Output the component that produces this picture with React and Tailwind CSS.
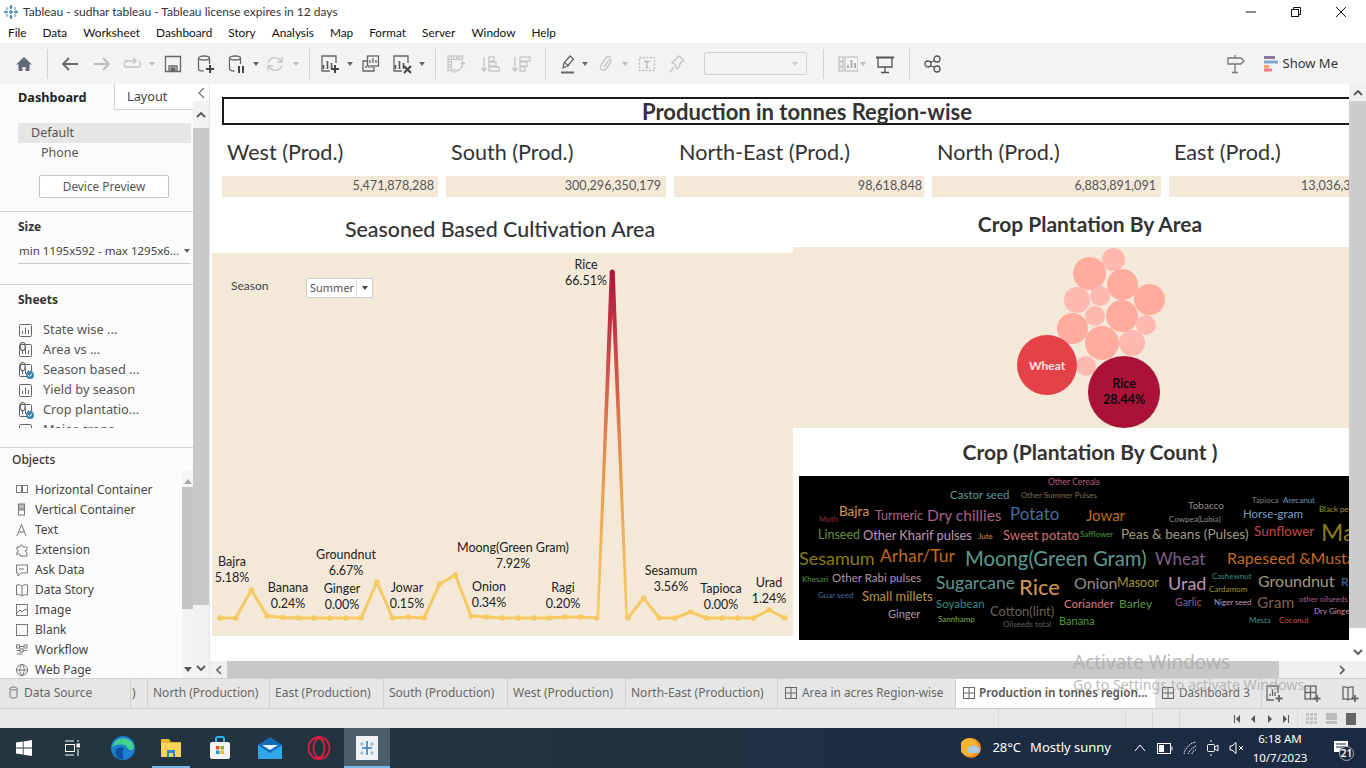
import React from "react";

const S = ({ c = "#555", w = 20, h = 20, children, className = "" }) => (
  <svg width={w} height={h} viewBox={`0 0 ${w} ${h}`} fill="none" stroke={c} strokeWidth="1.3" className={`shrink-0 ${className}`}>{children}</svg>
);
const Caret = ({ c = "#777", className = "" }) => (
  <svg width="6" height="4" viewBox="0 0 6 4" className={`shrink-0 ${className}`}><path d="M0 0h6L3 4z" fill={c} /></svg>
);
const Sep = ({ className = "" }) => <div className={`w-px h-[30px] bg-[#d2d2d2] shrink-0 ${className}`} />;
const Bars = ({ c = "#555" }) => <><path d="M3.5 11v4M7.5 7v8M11.5 9v6" stroke={c} strokeWidth="1.6" /></>;

const MiniSheet = ({ check }) => (
  <span className="relative shrink-0 w-[13px] h-[13px] block">
    <svg width="13" height="13" viewBox="0 0 13 13" fill="none" stroke="#666"><rect x=".5" y=".5" width="12" height="12" rx="1" /><path d="M3.5 10V7M6.5 10V3.500M9.500 10V6" /></svg>
    {check && (
      <svg width="8" height="8" viewBox="0 0 8 8" className="absolute -right-[2px] -bottom-[2px]"><circle cx="4" cy="4" r="4" fill="#3b86ad" /><path d="M2 4l1.500 1.500L6 2.800" stroke="#fff" fill="none" /></svg>
    )}
  </span>
);

const objIcons = {
  h: <><rect x="1.500" y="2.500" width="5" height="7" /><rect x="7.500" y="2.500" width="5" height="7" /></>,
  v: <><rect x="3.500" y="1" width="6" height="5" fill="#bbb" /><rect x="3.500" y="7" width="6" height="5" /></>,
  t: <path d="M2 13L6.500 1.500 11 13M3.600 9h6" />,
  e: <path d="M2 4h3c0-3 3-3 3 0h4v3l-2 1 2 2v3H5v-1c0-2-3-2-3 0V9c2 0 2-2 0-2z" />,
  a: <path d="M1.500 2h11v8H6l-3 3v-3H1.500zM4 6h5" />,
  d: <path d="M7 3c-2-1.500-4-1.500-5.500-1v10c1.500-.5 3.500-.5 5.500 1 2-1.500 4-1.500 5.500-1V2C11 1.500 9 1.500 7 3zv10" />,
  i: <><rect x="1.500" y="1.500" width="11" height="11" /><path d="M2 10l3-3 2 2 3-3 2 1" /></>,
  b: <rect x="1.500" y="1.500" width="11" height="11" />,
  w: <><rect x="1.500" y="2" width="3" height="3" /><rect x="9" y="2" width="3" height="3" /><rect x="5" y="6" width="3" height="3" /><path d="M5 3.500h4M1.500 7.500H5M8 7.500h4M2 11h5" /></>,
  g: <><circle cx="7" cy="7" r="5.500" /><path d="M1.500 7h11M7 1.500c-3 3-3 8 0 11 3-3 3-8 0-11z" /></>,
};

const objects = [["h", "Horizontal Container"], ["v", "Vertical Container"], ["t", "Text"], ["e", "Extension"], ["a", "Ask Data"], ["d", "Data Story"], ["i", "Image"], ["b", "Blank"], ["w", "Workflow"], ["g", "Web Page"]];
const sheets = [["State wise ...", 0], ["Area vs ...", 0], ["Season based ...", 1], ["Yield by season", 0], ["Crop plantatio...", 1], ["Major crops", 0]];

const ys = [618, 618, 590, 616, 617.5, 618, 618, 618, 618, 618, 582, 618, 617, 618, 584, 575, 616, 617, 618, 618, 618, 618, 617, 617, 618, 272, 618, 598, 618, 618, 612, 618, 618, 618, 618, 610, 618];
const pts = ys.map((y, i) => [220 - 212 + i * 15.69, y - 253]);
const labels = [
  ["Bajra", "5.18%", 232, 562], ["Banana", "0.24%", 288, 588], ["Groundnut", "6.67%", 346, 555], ["Ginger", "0.00%", 342, 589],
  ["Jowar", "0.15%", 407, 588], ["Moong(Green Gram)", "7.92%", 513, 548], ["Onion", "0.34%", 489, 587], ["Ragi", "0.20%", 563, 588],
  ["Rice", "66.51%", 586, 265], ["Sesamum", "3.56%", 671, 571], ["Tapioca", "0.00%", 721, 589], ["Urad", "1.24%", 769, 583],
];

const bubbles = [
  [1113, 259, 11.5, "#ffb9ae"], [1089, 273, 16.5, "#ffab9d"], [1122, 284, 15.5, "#ffab9d"], [1077, 300, 13, "#ffb9ae"], [1100, 296, 10, "#ffb9ae"],
  [1149, 299, 15.5, "#ffab9d"], [1095, 316, 10, "#ffb9ae"], [1122, 316, 16, "#ffab9d"], [1146, 325, 10, "#ffb9ae"], [1072, 328, 15.5, "#ffab9d"],
  [1102, 343, 17, "#ffab9d"], [1132, 343, 13, "#ffb9ae"], [1086, 366, 10, "#ffb9ae"], [1047, 365, 30, "#e54149"], [1124, 392, 36, "#ab1238"],
];

const words = [
  ["Other Cereals", 1048, 482, 8.5, "#c76b8c"], ["Castor seed", 950, 495, 11.5, "#6aa8a0"], ["Other Summer Pulses", 1021, 495, 8, "#8b7c5c"],
  ["Tobacco", 1188, 505, 10, "#a59f97"], ["Tapioca", 1252, 500, 8, "#8a8a8a"], ["Arecanut", 1283, 500, 8, "#7aa7c7"], ["Black pepper", 1319, 509, 8, "#b9a238"],
  ["Moth", 819, 519, 8, "#a0353e"], ["Bajra", 839, 512, 13.5, "#f1a95b"], ["Turmeric", 875, 516, 12.5, "#c46d8a"], ["Dry chillies", 927, 516, 15.5, "#bb6b93"],
  ["Potato", 1010, 513, 17, "#4f7cad"], ["Jowar", 1086, 515, 15, "#d9771e"], ["Cowpea(Lobia)", 1169, 519, 8, "#a59f97"], ["Horse-gram", 1243, 514, 11.5, "#84b0d8"],
  ["Linseed", 818, 535, 12.5, "#68a34e"], ["Other Kharif pulses", 863, 535, 12.8, "#d4a6c8"], ["Jute", 978, 536, 8, "#e0a050"], ["Sweet potato", 1003, 535, 13, "#e0807f"],
  ["Safflower", 1080, 534, 8, "#5aa84a"], ["Peas & beans (Pulses)", 1121, 535, 13.6, "#b5aa90"], ["Sunflower", 1254, 532, 13.5, "#d94f55"], ["Maize", 1321, 532, 24, "#9c8a1c"],
  ["Sesamum", 799, 558, 18, "#9c8a1c"], ["Arhar/Tur", 880, 556, 17.5, "#d9771e"], ["Moong(Green Gram)", 965, 558, 20.3, "#6aa8a0"], ["Wheat", 1155, 558, 17, "#8f6a8f"],
  ["Rapeseed &Mustard", 1227, 558, 16, "#d9771e"], ["Khesari", 802, 579, 8, "#5aa84a"], ["Other Rabi pulses", 832, 578, 11.5, "#c4a6bc"], ["Sugarcane", 936, 583, 17.5, "#6aa8a0"],
  ["Rice", 1019, 587, 22, "#f2a95c"], ["Onion", 1074, 583, 16, "#a59f97"], ["Masoor", 1117, 583, 12.5, "#b9a238"], ["Urad", 1168, 583, 18, "#d4a6c8"],
  ["Cashewnut", 1212, 576, 8, "#3f9f99"], ["Groundnut", 1258, 581, 16, "#b5aa90"], ["Ragi", 1341, 582, 12, "#4f7cad"], ["Cardamom", 1209, 589, 8, "#b9a238"],
  ["Guar seed", 818, 595, 8, "#4f7cad"], ["Small millets", 862, 596, 13, "#d4a54e"], ["Soyabean", 936, 604, 11.5, "#3f9f99"], ["Cotton(lint)", 990, 611, 13, "#6f6f6f"],
  ["Coriander", 1064, 604, 11.5, "#f08a85"], ["Barley", 1119, 604, 12, "#68a34e"], ["Garlic", 1175, 602, 10.5, "#9c6b9c"], ["Niger seed", 1214, 602, 8, "#d4a6c8"],
  ["Gram", 1257, 603, 15.5, "#8c6d5a"], ["other oilseeds", 1299, 599, 8, "#b06f9f"], ["Dry Ginger", 1314, 611, 8, "#d4a6c8"], ["Ginger", 888, 613, 11, "#c4a6bc"],
  ["Sannhamp", 938, 619, 8, "#8cc06f"], ["Oilseeds total", 1003, 624, 8, "#6f6f6f"], ["Banana", 1059, 620, 11, "#5aa84a"], ["Mesta", 1249, 620, 8, "#3f9f99"], ["Coconut", 1279, 620, 8, "#e05a5a"],
];

const kpis = [
  ["West (Prod.)", "5,471,878,288", "w-[216px]", "pr-[4px]"], ["South (Prod.)", "300,296,350,179", "w-[220px]", "pr-[5px]"], ["North-East (Prod.)", "98,618,848", "w-[250px]", "pr-[2px]"],
  ["North (Prod.)", "6,883,891,091", "w-[229px]", "pr-[5px]"], ["East (Prod.)", "13,036,364,507", "w-[226px]", "pr-[5px]"],
];

const tabs = [
  ["North (Production)", "w-[122px]"], ["East (Production)", "w-[114px]"], ["South (Production)", "w-[124px]"], ["West (Production)", "w-[118px]"], ["North-East (Production)", "w-[152px]"],
];

const Grid = ({ c = "#666" }) => (
  <svg width="12" height="12" viewBox="0 0 12 12" fill="none" stroke={c} className="shrink-0"><rect x=".5" y=".5" width="11" height="11" /><path d="M6 0v12M0 6h12" /></svg>
);
const BookFont = "font-['Lato',sans-serif]";

export default function App() {
  return (
    <div className="relative w-[1366px] h-[768px] overflow-hidden bg-white flex flex-col font-['Noto_Sans',sans-serif] text-[#333]">
      {/* Title bar */}
      <div className="h-[23px] flex items-center shrink-0 relative">
        <svg width="16" height="16" viewBox="0 0 16 16" className="ml-[3px] mr-[4px]" stroke="#3f8fb5" strokeWidth="1.400" fill="none"><path d="M8 1v4M6.500 3h3M8 11v4M6.500 13h3M1 8h4M3 6.500v3M11 8h4M13 6.500v3M8 6v4M6 8h4" /><path d="M4 3v3M2.800 4.500h2.500M12 3v3M10.800 4.500h2.500M4 10v3M2.800 11.500h2.500M12 10v3M10.800 11.500h2.500" stroke="#9cc3d6" /></svg>
        <span className="text-[12px] font-['Lato',sans-serif] whitespace-nowrap">Tableau - sudhar tableau - Tableau license expires in 12 days</span>
        <div className="ml-auto flex items-center">
          <svg width="12" height="12" viewBox="0 0 12 12" stroke="#111" className="mr-[33px]"><path d="M1 6h10" /></svg>
          <svg width="12" height="12" viewBox="0 0 12 12" stroke="#111" fill="none" className="mr-[33px]"><rect x="1.500" y="3.500" width="7" height="7" /><path d="M3.500 3.500v-2h7v7h-2" /></svg>
          <svg width="12" height="12" viewBox="0 0 12 12" stroke="#111" className="mr-[19px]"><path d="M1 1l10 10M11 1L1 11" /></svg>
        </div>
      </div>
      {/* Menu */}
      <div className="h-[20px] flex items-center shrink-0 pl-[8px] text-[11.800px] font-['Lato',sans-serif] text-[#111] pb-[1px] whitespace-nowrap">
        <span>File</span><span className="ml-[16px]">Data</span><span className="ml-[16px]">Worksheet</span><span className="ml-[16px]">Dashboard</span>
        <span className="ml-[16px]">Story</span><span className="ml-[16px]">Analysis</span><span className="ml-[16px]">Map</span><span className="ml-[16px]">Format</span>
        <span className="ml-[16px]">Server</span><span className="ml-[16px]">Window</span><span className="ml-[16px]">Help</span>
      </div>
      {/* Toolbar */}
      <div className="h-[41px] shrink-0 bg-[#f3f3f3] flex items-center relative">
        <S c="#5f6b75" className="ml-[14px]"><path d="M10 3L2 10.500h2.500V17h4v-4h3v4h4v-6.500H18z" fill="#5f6b75" stroke="none" /></S>
        <Sep className="ml-[13px]" />
        <S c="#666" className="ml-[12px]"><path d="M18 10H3M9 4l-6 6 6 6" strokeWidth="1.800" /></S>
        <S c="#bbb" className="ml-[12px]"><path d="M2 10h15M11 4l6 6-6 6" strokeWidth="1.800" /></S>
        <S c="#c4c4c4" className="ml-[10px]"><path d="M14 7H5a3 3 0 000 6h11a3 3 0 001-5.500M11 4l3 3-3 3" /></S>
        <Caret c="#bbb" className="ml-[7px]" />
        <S c="#666" className="ml-[8px]"><path d="M2.500 2.500h15v15h-15z" /><path d="M6 17v-5h8v5" /><rect x="8" y="14" width="4" height="3" fill="#666" /></S>
        <S c="#666" className="ml-[12px]"><ellipse cx="9" cy="4" rx="5.500" ry="2" /><path d="M3.500 4v11c0 1 1.500 2 5 2M14.500 4v6" /><path d="M15 11v8M11 15h8" strokeWidth="2" stroke="#444" /></S>
        <S c="#666" className="ml-[11px]"><ellipse cx="9" cy="4" rx="5.500" ry="2" /><path d="M3.500 4v11c0 1 1.500 2 5 2M14.500 4v6" /><path d="M13 12v7M17 12v7" strokeWidth="2" stroke="#444" /></S>
        <Caret c="#666" className="ml-[7px]" />
        <S c="#c4c4c4" className="ml-[6px]"><path d="M3 9a7 7 0 0112-3l2 2M17 11a7 7 0 01-12 3l-2-2M17 3v5h-5M3 17v-5h5" /></S>
        <Caret c="#bbb" className="ml-[8px]" />
        <Sep className="ml-[10px]" />
        <S c="#666" className="ml-[10px]"><path d="M16 9V2H2v15h8" /><Bars c="#555" /><path d="M15 11v8M11 15h8" strokeWidth="2" stroke="#444" /></S>
        <Caret c="#666" className="ml-[7px]" />
        <S c="#666" className="ml-[8px]"><rect x="6.500" y="2" width="11" height="10" /><path d="M9 9V6M12 9V4M15 9V6" /><path d="M6 7H2v10h11v-4M5 14v-2M8 14v-1M11 14v-1" /></S>
        <S c="#666" className="ml-[11px]"><path d="M16 9V2H2v15h8" /><Bars c="#555" /><path d="M12 12l7 7M19 12l-7 7" strokeWidth="2" stroke="#444" /></S>
        <Caret c="#666" className="ml-[7px]" />
        <Sep className="ml-[10px]" />
        <S c="#c4c4c4" className="ml-[10px]"><rect x="2" y="2" width="3.500" height="3.500" /><rect x="7.500" y="2" width="3.500" height="3.500" /><rect x="13" y="2" width="3.500" height="3.500" /><rect x="2" y="7.500" width="3.500" height="3.500" /><rect x="2" y="13" width="3.500" height="3.500" /><path d="M17 8c0 5-3 9-8 9M9 15l-2 2 2 2M15 10l2-2 2 2" /></S>
        <S c="#c4c4c4" className="ml-[14px]"><path d="M4 3v14M1.500 14L4 17l2.500-3" /><rect x="9" y="3" width="5" height="4" /><rect x="9" y="8" width="7" height="4" /><rect x="9" y="13" width="10" height="4" /></S>
        <S c="#c4c4c4" className="ml-[11px]"><path d="M4 3v14M1.500 14L4 17l2.500-3" /><rect x="9" y="3" width="10" height="4" /><rect x="9" y="8" width="7" height="4" /><rect x="9" y="13" width="5" height="4" /></S>
        <Sep className="ml-[14px]" />
        <S c="#666" className="ml-[12px]"><path d="M5 14l1-5 6-7 3.500 3-6 7zM7 9l4 3" /><path d="M3 18.500h13" strokeWidth="2" /></S>
        <Caret c="#666" className="ml-[4px]" />
        <S c="#c4c4c4" className="ml-[8px]"><path d="M15 4c-2-2-4-1-5 0l-5 7c-2 3 0 6 3 5 1 0 2-1 2-1l5-7c1-2-1-3-2-2l-5 7" /></S>
        <Caret c="#bbb" className="ml-[6px]" />
        <S c="#bbb" className="ml-[9px]"><rect x="2.500" y="3.500" width="15" height="13" strokeDasharray="2 1.500" /><path d="M7 7.500h6M10 7.500v6M8.500 13.500h3" /></S>
        <S c="#c4c4c4" className="ml-[10px]"><path d="M12 2l5 5-3 1-2 5-2 2-2-5-3-1 3-3zM7 13l-4 5" /></S>
        <div className="ml-[17px] w-[103px] h-[23px] border border-[#d0d0d0] rounded-[2px] flex items-center justify-end pr-[8px] shrink-0"><Caret c="#ccc" /></div>
        <Sep className="ml-[16px]" />
        <S c="#c4c4c4" className="ml-[14px]"><rect x="1" y="3" width="4" height="4" /><rect x="1" y="8" width="4" height="4" /><rect x="1" y="13" width="4" height="4" /><rect x="7" y="3" width="13" height="14" /><path d="M10 14v-3M13.500 14V6M17 14V9" strokeWidth="1.800" stroke="#aaa" /></S>
        <Caret c="#bbb" className="ml-[2px]" />
        <S c="#555" className="ml-[9px]"><path d="M1 3.500h18" strokeWidth="2" /><path d="M3 4v9h14V4M10 13v5M6 18.500h8" /></S>
        <Sep className="ml-[14px]" />
        <S c="#555" className="ml-[13px]"><circle cx="5" cy="10" r="3" /><circle cx="14" cy="5" r="3" /><circle cx="14" cy="15" r="3" /><path d="M7.500 8.500l4-2M7.500 11.500l4 2" /></S>
        <S c="#777" className="ml-auto"><path d="M2 4h13l3 3-3 3H2zM9 10v8M6 18.500h6M9 1v3" /></S>
        <svg width="16" height="16" viewBox="0 0 16 16" className="ml-[18px] shrink-0"><rect y="0" width="11" height="3" fill="#8a7a9f" /><rect y="4.500" width="14" height="3" fill="#85a8d0" /><rect y="9" width="5" height="3" fill="#f4a266" /><rect y="12.500" width="8" height="3" fill="#f17a84" /></svg>
        <span className="ml-[3px] mr-[28px] text-[13px] text-[#333]">Show Me</span>
      </div>
      {/* Main */}
      <div className="h-[594px] shrink-0 flex">
        {/* Sidebar */}
        <div className="w-[210px] shrink-0 flex border-r border-[#e4e4e4] bg-[#fbfbfb]">
          <div className="w-[193px] shrink-0 flex flex-col">
            <div className="h-[26px] shrink-0 flex">
              <div className="w-[114px] flex items-center pl-[18px] pt-[1px] text-[12.700px] font-bold text-[#222]">Dashboard</div>
              <div className="w-[79px] flex items-center pl-[12px] pt-[1px] text-[12.700px] border-l border-b border-[#d0d0d0] bg-white text-[#444]">Layout</div>
            </div>
            <div className="h-[102px] shrink-0 border-b border-[#cfcfcf] pt-[13px] flex flex-col text-[12.500px] text-[#555]">
              <div className="ml-[18px] w-[173px] h-[20px] pt-[1px] bg-[#e6e6e6] flex items-center pl-[13px]">Default</div>
              <div className="h-[20px] pl-[41px] pt-[1px] flex items-center">Phone</div>
              <div className="ml-[39px] mt-[12px] w-[130px] h-[23px] border border-[#c6c6c6] rounded-[2px] flex items-center justify-center text-[11.800px] bg-white">Device Preview</div>
            </div>
            <div className="h-[73px] shrink-0 border-b border-[#cfcfcf] flex flex-col">
              <div className="pl-[18px] h-[28px] mt-[1px] flex items-center text-[12px] font-bold text-[#333]">Size</div>
              <div className="ml-[18px] w-[173px] h-[22px] mt-[1px] border-b border-[#c8c8c8] flex items-center pl-[1px] pr-[1px] text-[11.500px] justify-between pb-[3px] text-[#444]">
                <span className="whitespace-nowrap">min 1195x592 - max 1295x6...</span><Caret c="#666" />
              </div>
            </div>
            <div className="h-[163px] shrink-0 border-b border-[#cfcfcf] flex flex-col">
              <div className="pl-[18px] h-[28px] mt-[1px] flex items-center text-[12px] font-bold text-[#333]">Sheets</div>
              <div className="mt-[6px] h-[108px] overflow-hidden flex flex-col">
                {sheets.map(([t, c]) => (
                  <div key={t} className="h-[20px] shrink-0 flex items-center pl-[19px] text-[12.800px] text-[#555]">
                    <MiniSheet check={c} /><span className="ml-[11px] whitespace-nowrap">{t}</span>
                  </div>
                ))}
              </div>
            </div>
            <div className="flex-1 flex flex-col min-h-0">
              <div className="pl-[12px] h-[23px] flex items-center text-[12px] font-medium text-[#333]">Objects</div>
              <div className="flex flex-1 min-h-0">
                <div className="w-[182px] pt-[9px] shrink-0 overflow-hidden">
                  {objects.map(([k, t]) => (
                    <div key={t} className="h-[20px] flex items-center pl-[16px] text-[12px] text-[#444] whitespace-nowrap">
                      <svg width="14" height="14" viewBox="0 0 14 14" fill="none" stroke="#777" className="shrink-0 -ml-[1px]">{objIcons[k]}</svg>
                      <span className="ml-[6px]">{t}</span>
                    </div>
                  ))}
                </div>
                <div className="w-[11px] flex flex-col items-center pt-[8px] bg-[#f4f4f4]">
                  <svg width="8" height="5" viewBox="0 0 8 5"><path d="M4 0l4 5H0z" fill="#aaa" /></svg>
                  <div className="w-full h-[122px] mt-[3px] bg-[#c4c4c4]" />
                  <svg width="8" height="5" viewBox="0 0 8 5" className="mt-auto mb-[6px]"><path d="M4 5l4-5H0z" fill="#555" /></svg>
                </div>
              </div>
            </div>
          </div>
          <div className="w-[16px] shrink-0 flex flex-col items-center bg-[#f2f2f2]">
            <div className="h-[17px] w-full bg-white flex items-center justify-center relative">
              <svg width="7" height="12" viewBox="0 0 7 12" fill="none" stroke="#777" strokeWidth="1.300"><path d="M6 1L1 6l5 5" /></svg>
            </div>
            <div className="h-[27px] w-full flex items-center justify-center">
              <svg width="10" height="6" viewBox="0 0 10 6" fill="none" stroke="#555" strokeWidth="1.800"><path d="M1 5l4-4 4 4" /></svg>
            </div>
            <div className="w-full h-[477px] bg-[#c8c8c8]" />
            <svg width="10" height="6" viewBox="0 0 10 6" fill="none" stroke="#555" strokeWidth="1.800" className="mt-auto mb-[7px]"><path d="M1 1l4 4 4-4" /></svg>
          </div>
        </div>
        {/* Canvas */}
        <div className="flex-1 min-w-0 flex flex-col">
          <div className="h-[577px] flex min-h-0">
            <div className="w-[1139px] overflow-hidden relative">
              <div className={`${BookFont} w-[1200px]`}>
                <div className="mt-[13px] ml-[12px] w-[1170px] h-[28px] border-2 border-[#1a1a1a] flex items-center justify-center text-[22px] font-bold text-[#333]">Production in tonnes Region-wise</div>
                <div className="mt-[12px] ml-[12px] flex gap-[8px] whitespace-nowrap">
                  {kpis.map(([h, v, w, p]) => (
                    <div key={h} className={`${w} shrink-0`}>
                      <div className="h-[30px] flex items-center pl-[5px] text-[21.600px] text-[#333]">{h}</div>
                      <div className={`mt-[9px] h-[21px] bg-[#f4e9d8] flex items-center justify-end ${p} text-[12.600px] text-[#555]`}>{v}</div>
                    </div>
                  ))}
                </div>
                <div className="flex ml-[2px]">
                  <div className="w-[581px] shrink-0">
                    <div className="h-[56px] pt-[8px] flex items-center justify-center text-[21.400px] text-[#333] font-medium pr-[5px]">Seasoned Based Cultivation Area</div>
                    <div className="relative h-[383px] bg-[#f4e9d8]">
                      <span className="absolute left-[19px] top-[24px] text-[12px] text-[#444]">Season</span>
                      <div className="absolute left-[94px] top-[25px] w-[67px] h-[20px] bg-white border border-[#cfcfcf] rounded-[2px] flex items-center text-[11px] text-[#555] pl-[3px]">
                        <span className="font-['Noto_Sans',sans-serif]">Summer</span>
                        <span className="ml-auto h-full w-[16px] border-l border-[#ddd] flex items-center justify-center"><Caret c="#444" /></span>
                      </div>
                      <svg width="581" height="383" className="absolute inset-0">
                        <defs>
                          <linearGradient id="lg" gradientUnits="userSpaceOnUse" x1="0" y1="365" x2="0" y2="19">
                            <stop offset="0" stopColor="#f9cd66" /><stop offset=".07" stopColor="#f7c45f" /><stop offset=".45" stopColor="#e6954e" /><stop offset=".75" stopColor="#cf4a4a" /><stop offset="1" stopColor="#b0133c" />
                          </linearGradient>
                        </defs>
                        <path d={"M" + pts.slice(0, 25).map((p) => p.join(" ")).join("L")} stroke="#f7c962" strokeWidth="3" fill="none" strokeLinejoin="round" />
                        <path d={"M" + pts.slice(26).map((p) => p.join(" ")).join("L")} stroke="#f7c962" strokeWidth="3" fill="none" strokeLinejoin="round" />
                        <path d={`M${pts[24][0]} 365L${pts[25][0] - 2.500} 19H${pts[25][0] + 2.500}L${pts[26][0]} 365z`} fill="url(#lg)" stroke="none" />
                        <path d={`M${pts[24][0] + 2.500} 365L${pts[25][0]} 62L${pts[26][0] - 2.500} 365z`} fill="#f4e9d8" stroke="none" />
                        {pts.map(([x, y], i) => (
                          <circle key={i} cx={x} cy={y} r={i === 25 ? 2.500 : 2.800} fill={i === 25 ? "#b0133c" : "#f7c962"} />
                        ))}
                      </svg>
                      {labels.map(([a, b, cx, y]) => (
                        <div key={a} className="absolute -translate-x-1/2 text-center text-[12.500px] leading-[16px] text-[#222] whitespace-nowrap" style={{ left: cx - 212, top: y - 8 - 253 }}>
                          <div>{a}</div><div>{b}</div>
                        </div>
                      ))}
                    </div>
                  </div>
                  <div className="w-[594px] shrink-0">
                    <div className="h-[50px] pt-[4px] flex items-center justify-center text-[21px] font-bold text-[#333]">Crop Plantation By Area</div>
                    <div className="relative h-[181px] bg-[#f4e9d8] overflow-hidden">
                      {bubbles.map(([x, y, r, c], i) => (
                        <div key={i} className="absolute rounded-full" style={{ left: x - r - 793, top: y - r - 247, width: r * 2, height: r * 2, background: c }} />
                      ))}
                      <span className="absolute left-[236px] top-[110px] text-[12px] font-bold text-[#ffe4e0]">Wheat</span>
                      <div className="absolute left-[310px] top-[129px] text-center text-[12.500px] leading-[16px] font-bold text-[#0a0a0a]"><div>Rice</div><div>28.44%</div></div>
                    </div>
                    <div className="h-[48px] flex items-center justify-center text-[21px] font-bold text-[#333]">Crop (Plantation By Count )</div>
                    <div className="relative ml-[6px] h-[164px] bg-black overflow-hidden">
                      {words.map(([t, x, y, s, c]) => (
                        <span key={t} className="absolute leading-none whitespace-nowrap -translate-y-1/2 opacity-90" style={{ left: x - 799, top: y - 476, fontSize: s, color: c }}>{t}</span>
                      ))}
                    </div>
                  </div>
                </div>
              </div>
            </div>
            <div className="flex-1 flex flex-col items-center">
              <div className="h-[17px] w-full bg-[#f0f0f0] flex items-center justify-center">
                <svg width="10" height="6" viewBox="0 0 10 6" fill="none" stroke="#555" strokeWidth="1.800"><path d="M1 5l4-4 4 4" /></svg>
              </div>
              <div className="w-full h-[527px] bg-[#cdcdcd]" />
              <svg width="10" height="6" viewBox="0 0 10 6" fill="none" stroke="#555" strokeWidth="1.800" className="mt-auto mb-[6px]"><path d="M1 1l4 4 4-4" /></svg>
            </div>
          </div>
          <div className="h-[17px] shrink-0 bg-[#f0f0f0] flex items-center">
            <div className="w-[17px] flex justify-center"><svg width="6" height="10" viewBox="0 0 6 10" fill="none" stroke="#666" strokeWidth="1.600"><path d="M5 1L1 5l4 4" /></svg></div>
            <div className="w-[1052px] h-full bg-[#c8c8c8]" />
            <svg width="6" height="10" viewBox="0 0 6 10" fill="none" stroke="#555" strokeWidth="1.600" className="ml-auto mr-[21px]"><path d="M1 1l4 4-4 4" /></svg>
          </div>
        </div>
      </div>
      {/* Tabs */}
      <div className="h-[31px] shrink-0 bg-[#e6e6e6] border-y border-[#d0d0d0] flex text-[12px] text-[#666] whitespace-nowrap">
        <div className="w-[131px] border-r border-[#cfcfcf] flex items-center pl-[9px] pb-[2px]">
          <svg width="9" height="13" viewBox="0 0 9 13" fill="none" stroke="#777" className="shrink-0"><ellipse cx="4.500" cy="2.500" rx="3.500" ry="1.500" /><path d="M1 2.500v8c0 1 1.500 1.500 3.500 1.500S8 11.500 8 10.500v-8" /></svg>
          <span className="ml-[6px]">Data Source</span>
        </div>
        <div className="w-[17px] border-r border-[#cfcfcf] flex items-center pl-[1px] pb-[2px]">)</div>
        {tabs.map(([t, w]) => (
          <div key={t} className={`${w} border-r border-[#cfcfcf] flex items-center pl-[5px] pb-[2px]`}>{t}</div>
        ))}
        <div className="w-[178px] border-r border-[#cfcfcf] flex items-center pl-[7px] gap-[5px] pb-[2px] text-[11.800px]"><Grid />Area in acres Region-wise</div>
        <div className="w-[199px] bg-white flex items-center pl-[7px] gap-[4px] font-semibold text-[11.700px] text-[#555] pb-[2px]"><Grid />Production in tonnes region...</div>
        <div className="w-[107px] flex items-center pl-[7px] gap-[5px] border-r border-[#cfcfcf] pb-[2px] text-[11.800px]"><Grid />Dashboard 3</div>
        <div className="flex-1 flex items-center justify-end pr-[6px] gap-[18px]">
          <S c="#666" w={20} h={20}><path d="M14 9V2H3v14h7" /><path d="M6 12v-2M8.500 12V6M11 12V8" /><path d="M15 11v7M11.500 14.500h7" strokeWidth="1.800" /></S>
          <S c="#666" w={20} h={20}><rect x="3" y="2" width="11" height="13" /><path d="M8.500 2v13M3 8.500h11" /><path d="M15 11v7M11.500 14.500h7" strokeWidth="1.800" fill="#e6e6e6" /></S>
          <S c="#666" w={20} h={20}><path d="M8 4C6 2.500 5 2.500 3 3v12c2-.5 3-.5 5 1 2-1.500 3-1.500 5-1V3c-2-.5-3-.5-5 1v12" /><path d="M15 11v7M11.500 14.500h7" strokeWidth="1.800" /></S>
        </div>
      </div>
      {/* Status */}
      <div className="h-[19px] shrink-0 bg-[#e8e8e8] flex items-center relative">
        <div className="w-[999px] h-full border-r border-[#d8d8d8]" />
        <div className="w-[127px] h-full border-r border-[#d8d8d8]" />
        <div className="w-[27px] h-full border-r border-[#d8d8d8]" />
        <div className="w-[27px] h-full border-r border-[#d8d8d8]" />
        <div className="w-[118px] h-full border-r border-[#d8d8d8] flex items-center justify-end pr-[8px] gap-[9px]">
          <svg width="6" height="8" viewBox="0 0 6 8" fill="#555"><path d="M0 0h1v8H0zM6 0v8L2 4z" /></svg>
          <svg width="4" height="8" viewBox="0 0 4 8" fill="#555" className="mx-[2px]"><path d="M4 0v8L0 4z" /></svg>
          <svg width="4" height="8" viewBox="0 0 4 8" fill="#555" className="mx-[2px]"><path d="M0 0v8l4-4z" /></svg>
          <svg width="6" height="8" viewBox="0 0 6 8" fill="#555"><path d="M5 0h1v8H5zM0 0v8l4-4z" /></svg>
        </div>
        <div className="flex items-center ml-[8px] gap-[9px]">
          <div className="w-[11px] h-[11px] grid grid-cols-3 gap-px">{[...Array(9)].map((_, i) => <div key={i} className="bg-[#c4c4c4]" />)}</div>
          <div className="w-[11px] h-[11px] flex flex-col gap-px"><div className="flex-1 bg-[#bbb]" /><div className="h-[3px] bg-[#bbb]" /></div>
          <div className="w-[10px] h-[12px] bg-[#666]" />
        </div>
      </div>
      {/* Taskbar */}
      <div className="flex-1 bg-gradient-to-r from-[#24363f] to-[#1b2a42] flex items-center relative text-white">
        <svg width="16" height="16" viewBox="0 0 16 16" fill="#fff" className="ml-[16px]"><path d="M0 2.500L6.800 1.500V7.500H0zM7.600 1.400L16 0v7.500H7.600zM0 8.400h6.800v6L0 13.500zM7.600 8.400H16V16l-8.400-1.200z" /></svg>
        <svg width="18" height="18" viewBox="0 0 18 18" fill="none" stroke="#fff" className="ml-[31px]"><path d="M2 2h9M2 16h9" /><rect x="2.500" y="5.500" width="9" height="7" /><rect x="14" y="5" width="2.500" height="3" fill="#fff" /><path d="M15 1v2M15 10v7" /></svg>
        <svg width="24" height="24" viewBox="0 0 24 24" className="ml-[30px]"><circle cx="12" cy="12" r="12" fill="#1a7fd0" /><path d="M1 11C3 2 15-1 21 6c3 4 2 9-2 8-3 0-2-4-6-5-5-1-10 0-12 2z" fill="#45d08e" /><path d="M13 23C7 24 3 19 5 14c2-3 6-3 8-1-2 2-2 7 0 10z" fill="#0b4f9e" /></svg>
        <svg width="22" height="22" viewBox="0 0 22 22" className="ml-[25px]"><path d="M1 2h8l2 3h10v5H1z" fill="#f0b52f" /><rect x="1" y="6" width="20" height="14" fill="#fbd25a" /><rect x="7" y="13" width="8" height="7" fill="#2a88d0" /><rect x="9" y="16" width="4" height="4" fill="#fbd25a" /></svg>
        <svg width="22" height="24" viewBox="0 0 22 24" className="ml-[27px]"><path d="M7 6V3a2 2 0 012-2h4a2 2 0 012 2v3" fill="none" stroke="#29b6e8" strokeWidth="2" /><rect x="1" y="6" width="20" height="17" rx="2" fill="#f4f4f4" /><rect x="7" y="10" width="3.500" height="3.500" fill="#e8512a" /><rect x="11.500" y="10" width="3.500" height="3.500" fill="#7db72f" /><rect x="7" y="14.500" width="3.500" height="3.500" fill="#1f9be0" /><rect x="11.500" y="14.500" width="3.500" height="3.500" fill="#f6b80e" /></svg>
        <svg width="24" height="22" viewBox="0 0 24 22" className="ml-[27px]"><path d="M12 0l12 8v14H0V8z" fill="#0f6cbd" /><path d="M0 8l12 8 12-8v14H0z" fill="#2fa7e8" /><path d="M4 8h16l-8 5z" fill="#eaf5fb" /></svg>
        <svg width="24" height="24" viewBox="0 0 24 24" fill="none" stroke="#d81e3f" className="ml-[25px]"><ellipse cx="12" cy="12" rx="10.500" ry="11" strokeWidth="1.800" /><ellipse cx="12" cy="12" rx="5.500" ry="9.500" strokeWidth="1.800" /></svg>
        <div className="ml-[13px] w-[46px] h-[40px] bg-[#4a5d68] flex items-center justify-center relative shrink-0">
          <svg width="22" height="24" viewBox="0 0 22 24" stroke="#2f80b8" fill="none"><rect width="22" height="24" fill="#eef2f5" stroke="none" /><path d="M11 5v14M6 12h10" strokeWidth="1.500" /><path d="M6 6v4M4 8h4M16 6v4M14 8h4M6 15v4M4 17h4M16 15v4M14 17h4" stroke="#8ab5d0" /></svg>
          <div className="absolute bottom-0 inset-x-0 h-[2px] bg-[#76b9ed]" />
        </div>
        <div className="absolute left-[152px] bottom-0 w-[38px] h-[2px] bg-[#76b9ed]" />
        <div className="ml-auto flex items-center">
          <svg width="24" height="24" viewBox="0 0 24 24"><circle cx="10" cy="12" r="10" fill="#f08a1d" /><circle cx="8" cy="11" r="9" fill="#f7b332" /><path d="M9 17a3 3 0 010-6 4 4 0 017 0 3 3 0 010 6z" fill="#a9c8e4" /></svg>
          <span className="ml-[7px] text-[13px]">28°C</span>
          <span className="ml-[9px] text-[13px]">Mostly sunny</span>
          <svg width="12" height="8" viewBox="0 0 12 8" fill="none" stroke="#fff" className="ml-[23px]"><path d="M1 7l5-6 5 6" /></svg>
          <svg width="16" height="11" viewBox="0 0 16 11" fill="none" stroke="#fff" className="ml-[11px]"><rect x=".5" y=".5" width="13" height="10" /><rect x="2" y="2" width="5" height="7" fill="#fff" stroke="none" /><path d="M15 3.500v4" /></svg>
          <svg width="14" height="14" viewBox="0 0 14 14" fill="none" stroke="#fff" className="ml-[10px]" strokeDasharray="1.500 1"><path d="M1 13C2 7 7 2 13 1M5 13c1-3 4-6 8-8M9 13c0-2 2-4 4-4" /></svg>
          <svg width="14" height="16" viewBox="0 0 14 16" fill="none" stroke="#fff" className="ml-[9px]"><rect x="1.500" y="4.500" width="7" height="7" rx="1" /><path d="M9 7l3-2v6l-3-2M4 1h2M4 15h2" /></svg>
          <svg width="16" height="14" viewBox="0 0 16 14" fill="none" stroke="#fff" className="ml-[9px]"><path d="M1 5h2l4-3.500v11L3 9H1zM10 5l4 4M14 5l-4 4" /></svg>
          <div className="ml-[4px] w-[62px] text-center text-[11.500px] leading-[19px]"><div>6:18 AM</div><div>10/7/2023</div></div>
          <div className="relative ml-[22px] mr-[17px] w-[16px] h-[16px]">
            <svg width="16" height="16" viewBox="0 0 16 16"><path d="M1 1h14v11H9l-3 3v-3H1z" fill="#fff" /><path d="M3 4h10M3 7h10" stroke="#1b2a42" /></svg>
            <div className="absolute left-[6px] top-[6px] w-[15px] h-[15px] rounded-full bg-[#1b2a42] border border-[#aaa] flex items-center justify-center text-[10px] font-semibold">21</div>
          </div>
        </div>
      </div>
      {/* Activation watermark */}
      <div className="absolute left-[1073px] top-[650px] text-[19px] leading-[24px] text-[#aaa]/80 whitespace-nowrap">Activate Windows</div>
      <div className="absolute left-[1073px] top-[676px] text-[14.200px] leading-[18px] text-[#aaa]/80 whitespace-nowrap">Go to Settings to activate Windows.</div>
    </div>
  );
}
